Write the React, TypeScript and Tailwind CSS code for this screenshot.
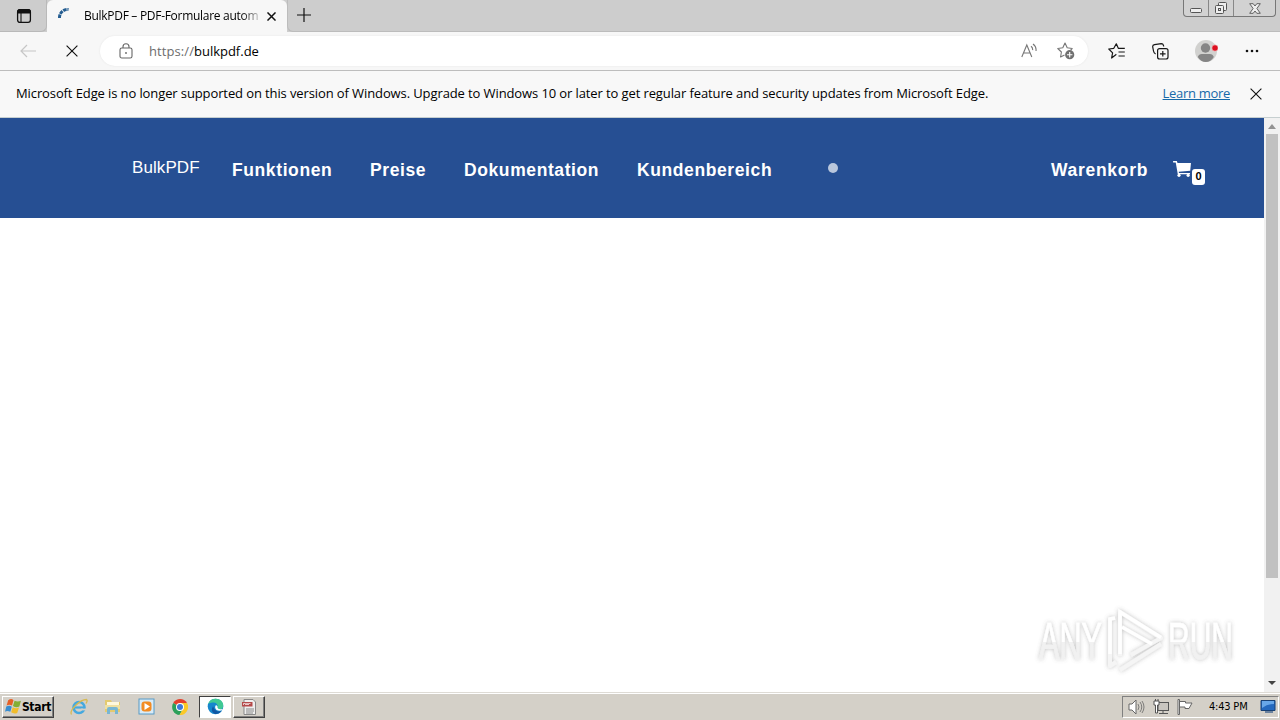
import React from "react";

const ui = "font-['Open_Sans','Noto_Sans',sans-serif]";

function Cross({ size, w = 1.2 }: { size: number; w?: number }) {
  return (
    <svg width={size} height={size} viewBox="0 0 12 12" fill="none" stroke="#111" strokeWidth={w} className="shrink-0">
      <path d="M.6.6l10.8 10.8M11.4.6L.6 11.4" />
    </svg>
  );
}

function TabBar() {
  return (
    <header className="flex h-8 shrink-0 items-start bg-[#cdcdcd]">
      <div className="flex h-8 w-[47px] shrink-0 items-center rounded-br-md border-r border-b border-[#b9b9b9] pl-4">
        <svg width="16" height="16" viewBox="0 0 16 16" fill="none" stroke="#111">
          <rect x="1.6" y="1.6" width="12.8" height="12.8" rx="2.3" strokeWidth="1.3" />
          <path d="M1.6 4V3.5q0-2 2-2h8.800q2 0 2 2V5H1.600z" fill="#111" />
          <path d="M5 5v9.400" strokeWidth="1.1" />
        </svg>
      </div>
      <div className="flex h-8 w-[240px] shrink-0 items-center rounded-t-md bg-[#f7f7f7] pl-[10px]">
        <svg width="14" height="14" viewBox="0 0 14 14" fill="none" stroke="#245d91" strokeWidth="3" className="mb-1">
          <path d="M2.500 11A8 8 0 0 1 11.500 2.500" strokeDasharray="3.500 .8" />
        </svg>
        <div className="ml-[13px] flex h-5 w-[175px] shrink-0 items-center [mask-image:linear-gradient(to_right,black_90%,#0003)]">
          <span className={`${ui} whitespace-nowrap text-[12px] leading-5 tracking-[-0.29px] text-black`}>BulkPDF – PDF-Formulare autom</span>
        </div>
        <span className="ml-[8px]"><Cross size={9} w={2} /></span>
      </div>
      <div className="flex h-8 flex-1 items-start justify-between rounded-bl-md border-b border-l border-[#bcbcbc] pr-1 pl-[9px]">
        <svg width="14" height="14" viewBox="0 0 14 14" stroke="#111" strokeWidth="1.2" className="mt-2"><path d="M7 0v14M0 7h14" /></svg>
        <div className="flex h-[17px] w-[93px] rounded-b-[4px] border border-t-0 border-[#777] bg-[#d2d2d2]">
          <div className="flex w-[25px] items-center justify-center border-r border-[#888] pt-1">
            <svg width="12" height="5" viewBox="0 0 12 5"><rect x=".5" y=".5" width="11" height="4" rx="1" fill="#eee" stroke="#555" /></svg>
          </div>
          <div className="flex w-[25px] items-center justify-center border-r border-[#888]">
            <svg width="14" height="14" viewBox="0 0 14 14" fill="#eee" stroke="#555"><rect x="4.500" y="1.500" width="8" height="8" rx="1" /><rect x="1.500" y="4.500" width="8" height="8" rx="1" /><rect x="4.500" y="7.500" width="2" height="2" /></svg>
          </div>
          <div className="flex flex-1 items-center justify-center">
            <svg width="12" height="11" viewBox="0 0 12 11" fill="#eee" stroke="#555" strokeWidth=".9"><path d="M.7.700h3.500L6 3 7.800.700h3.500L7.900 5.500l3.400 4.800H7.800L6 8 4.200 10.300H.7l3.400-4.800z" /></svg>
          </div>
        </div>
      </div>
    </header>
  );
}

function Toolbar() {
  return (
    <div className="flex h-[39px] shrink-0 items-center border-b border-[#bdbdbd] bg-[#f7f7f7] pl-5">
      <svg width="16" height="14" viewBox="0 0 16 14" fill="none" stroke="#c6c6c6" strokeWidth="1.2" className="shrink-0"><path d="M16 7H1M7 1L1 7l6 6" /></svg>
      <span className="ml-[30px]"><Cross size={12} w={1.15} /></span>
      <div className="ml-[22px] flex h-[30px] w-[988px] shrink-0 items-center rounded-full bg-white pl-[19px] shadow-[0_0_2px_#e3e3e3]">
        <svg width="14" height="16" viewBox="0 0 14 16" fill="none" stroke="#666" strokeWidth="1.100" className="shrink-0">
          <rect x="1" y="5" width="12" height="10" rx="1.800" /><path d="M4 5V3.800a3 3 0 0 1 6 0V5" /><circle cx="7" cy="10" r=".9" fill="#666" stroke="none" />
        </svg>
        <span className={`${ui} ml-4 w-[873px] whitespace-nowrap text-[13px] leading-5 tracking-[-0.01px] text-black`}><span className="tracking-[0.08px] text-[#6d6d6d]">https://</span>bulkpdf.de</span>
        <svg width="16" height="16" viewBox="0 0 16 16" fill="none" stroke="#777" strokeWidth="1.100" className="-ml-px shrink-0">
          <path d="M.8 14L5.800 2l5 12M2.700 10h6.200M10 3.200q2 1.500 1.600 4M12 1q3.600 2.600 3 7" />
        </svg>
        <svg width="18" height="18" viewBox="0 0 18 18" fill="none" stroke="#777" strokeWidth="1.100" className="ml-5 shrink-0">
          <path d="M7.500 13L3.600 15l.8-5L.8 6.500l5-.7L8 1l2.200 4.800 5 .7-1.500 1.500" strokeLinejoin="round" />
          <circle cx="12.700" cy="12.700" r="4.600" fill="#707070" stroke="none" /><path d="M12.700 10v5.400M10 12.700h5.400" stroke="#fff" />
        </svg>
      </div>
      <svg width="18" height="16" viewBox="0 0 18 16" fill="none" stroke="#171717" strokeWidth="1.200" strokeLinejoin="round" className="ml-[19.500px] shrink-0">
        <path d="M7.500 12L3.600 15l1-5.200L.8 6l5-.7L8.300.8l2 4.500h6.500M7.500 12l.8-.7M10.500 9h6.300M10.500 13h6.300" />
      </svg>
      <svg width="17" height="17" viewBox="0 0 17 17" fill="none" stroke="#171717" strokeWidth="1.200" strokeLinejoin="round" className="ml-[26px] shrink-0">
        <rect x="5.600" y="5.600" width="10.400" height="10.400" rx="2" /><path d="M10.800 8v5.600M8 10.800h5.600M3.600 11Q1.800 10 1.500 8L.7 3.800Q.5 2 2.500 1.600l6.800-1q1.700 0 2.200 1.900l.2 1" />
      </svg>
      <svg width="24" height="24" viewBox="0 0 24 24" className="ml-[25.500px] shrink-0">
        <circle cx="12" cy="12" r="11" fill="#d1d1cf" /><circle cx="11.500" cy="9" r="4.700" fill="#858585" /><path d="M3.800 18q1-3 4-3h8q3 0 4 3-3 5-8 5t-8-5z" fill="#858585" /><circle cx="21" cy="9" r="3.200" fill="#dc1020" stroke="#f8dcdc" strokeWidth=".6" />
      </svg>
      <svg width="14" height="4" viewBox="0 0 14 4" fill="#111" className="ml-[27px] shrink-0"><circle cx="2" cy="2" r="1.300" /><circle cx="7" cy="2" r="1.300" /><circle cx="12" cy="2" r="1.300" /></svg>
    </div>
  );
}

function Notice() {
  return (
    <div className={`${ui} flex h-[47px] shrink-0 items-center border-b border-[#c6cfd0] bg-[#f8f8f8] pr-[18px] pl-4 text-[13px] text-black`}>
      <span className="whitespace-nowrap tracking-[-0.107px]">Microsoft Edge is no longer supported on this version of Windows. Upgrade to Windows 10 or later to get regular feature and security updates from Microsoft Edge.</span>
      <a className="mr-5 ml-auto whitespace-nowrap tracking-[-0.3px] text-[#1769a8] underline underline-offset-1">Learn more</a>
      <Cross size={12} w={1.1} />
    </div>
  );
}

function Page() {
  const nav = "whitespace-nowrap text-[17.500px] font-bold leading-5 mt-[3px] shrink-0";
  return (
    <div className="flex min-h-0 flex-1">
      <main className="relative flex-1 bg-white">
        <nav className="flex h-[100px] items-center bg-[#264f93] pl-[132px] font-['Liberation_Sans',Arial,sans-serif] text-white">
          <span className="mb-px w-[100px] shrink-0 text-[17px] leading-5 tracking-[0.08px]">BulkPDF</span>
          <span className={`${nav} w-[138px] tracking-[0.6px]`}>Funktionen</span>
          <span className={`${nav} w-[94px] tracking-[0.58px]`}>Preise</span>
          <span className={`${nav} w-[173px] tracking-[0.6px]`}>Dokumentation</span>
          <span className={`${nav} w-[191px] tracking-[0.6px]`}>Kundenbereich</span>
          <span className="size-[10px] shrink-0 rounded-full bg-[#b9c7dd]" />
          <span className={`${nav} ml-[213px] w-[122px] tracking-[0.7px]`}>Warenkorb</span>
          <span className="relative mt-[3px] h-[18px] w-8 shrink-0">
            <svg width="19" height="16" viewBox="0 0 20 17" fill="white"><path d="M0 0h4l.7 2H19l-.8 8.300L6 11.500l.2 1.200H18V14H5L2.800 1.600H0z" /><circle cx="6.300" cy="15.200" r="1.700" /><circle cx="16" cy="15.200" r="1.700" /></svg>
            <span className="absolute top-[8px] left-[19px] flex h-[16px] w-[13px] items-center justify-center rounded-[3px] bg-white text-[11px] font-bold leading-none text-black">0</span>
          </span>
        </nav>
        <svg width="202" height="74" viewBox="0 0 202 74" className="absolute right-[26px] bottom-[15px] overflow-visible">
          <defs>
            <filter id="glow" x="-20%" y="-20%" width="140%" height="140%"><feDropShadow dx="0" dy="0" stdDeviation="2" floodColor="#666" floodOpacity=".42" /></filter>
            <linearGradient id="shade" gradientUnits="userSpaceOnUse" x1="0" x2="0" y1="20" y2="56"><stop offset=".52" stopColor="#fff" /><stop offset=".54" stopColor="#f1f1f1" /></linearGradient>
          </defs>
          <g filter="url(#glow)">
            <g fill="url(#shade)" stroke="url(#shade)" strokeWidth=".6" fontFamily="Liberation Sans" fontSize="51">
              <text x="3" y="56" textLength="63" lengthAdjust="spacingAndGlyphs">ANY</text>
              <text x="132" y="56" textLength="65" lengthAdjust="spacingAndGlyphs">RUN</text>
            </g>
            <g fill="none" stroke="#f5f5f5" strokeWidth="4" strokeLinejoin="round">
              <path d="M84 53V9l41 26-30 17" /><path d="M74 15v48l6-4" /><path d="M84 67l41-26" />
            </g>
            <path d="M84 51V9l41 25.500M74 51V16l5-1M86 24l30 17" fill="none" stroke="#fff" strokeWidth="3.500" />
          </g>
        </svg>
      </main>
      <aside className="flex w-4 shrink-0 flex-col items-center bg-[#f1f1f1]">
        <div className="flex h-4 items-center"><svg width="8" height="5" viewBox="0 0 8 5"><path d="M0 5l4-5 4 5z" fill="#929292" /></svg></div>
        <div className="h-[444px] w-3 bg-[#c1c1c1]" />
        <div className="mt-auto flex h-[19px] items-center"><svg width="8" height="4" viewBox="0 0 8 4"><path d="M0 0h8L4 4z" fill="#444" /></svg></div>
      </aside>
    </div>
  );
}

function Taskbar() {
  const button = "flex h-[22px] shrink-0 items-center justify-center border border-t-white border-l-white border-r-[#404040] border-b-[#404040] shadow-[inset_-1px_-1px_#808080]";
  return (
    <footer className="flex h-7 shrink-0 items-center border-t border-[#dedbd5] bg-[#d4d0c8] pl-[2px] shadow-[inset_0_1px_white]">
      <button className={`${button} w-[52px] font-['DejaVu_Sans_Condensed','DejaVu_Sans',sans-serif] text-[12px] font-bold tracking-[-0.3px] text-black`}>
        <svg width="17" height="17" viewBox="0 0 16 16" className="shrink-0"><path d="M3 2q3-2 5 0L6.600 7Q4 5.600 1.500 7z" fill="#e66026" /><path d="M9 2.500q3 1.500 6 0L13.500 8q-3 1.500-6-.5z" fill="#83ae35" /><path d="M1.200 8q3-1.500 5.200.2L5 13q-3-1.500-5 0z" fill="#388dd0" /><path d="M7.300 8.700q2.700 1.700 5.900.3L11.500 14q-3 1.400-5.700-.5z" fill="#f1bd2c" /></svg>
        <span className="pt-px">Start</span>
      </button>
      <svg width="18" height="18" viewBox="0 0 18 18" className="ml-[16px] shrink-0">
        <circle cx="9" cy="9.500" r="5.500" fill="none" stroke="#45a9df" strokeWidth="2.600" /><path d="M5 9.500h9.500" stroke="#45a9df" strokeWidth="2.200" /><path d="M11 11.500h5" stroke="#d4d0c8" strokeWidth="1.800" /><path d="M1.500 16.500q-2-3 4-9t11-6q1.500 1-.5 4" fill="none" stroke="#d7b951" strokeWidth="1.300" />
      </svg>
      <svg width="17" height="17" viewBox="0 0 17 17" className="ml-[16px] shrink-0">
        <path d="M1 2h6l1 2h8v10H1z" fill="#e3ca70" /><path d="M3 4h12v6H3z" fill="#fff8dc" /><path d="M1 7h15v4H1z" fill="#efe0a2" /><path d="M3 16v-5q0-2 2-2h7q2 0 2 2v5h-3v-4H6v4z" fill="#78b6d3" />
      </svg>
      <svg width="17" height="17" viewBox="0 0 17 17" className="ml-[17px] shrink-0">
        <rect x="1" y="1" width="15" height="15" fill="#d9ebf7" stroke="#579ac5" /><rect x="3.500" y="3.500" width="10" height="10" rx="3" fill="#f28b23" /><path d="M6.500 5l5.500 3.500L6.500 12z" fill="#fff" />
      </svg>
      <svg width="16" height="16" viewBox="0 0 16 16" className="ml-[17px] shrink-0">
        <path d="M8 8L1.200 4A8 8 0 0 1 15 4z" fill="#e5402c" /><path d="M8 8L1.200 4A8 8 0 0 0 7.500 16L11 10z" fill="#2ba05a" /><path d="M8 8V4h7A8 8 0 0 1 7.500 16L11 10z" fill="#fbc927" /><circle cx="8" cy="8" r="4" fill="#fff" /><circle cx="8" cy="8" r="3" fill="#3d79da" />
      </svg>
      <div className="ml-[11px] flex h-[22px] w-8 shrink-0 items-center justify-center border border-t-[#404040] border-r-white border-b-white border-l-[#404040] bg-white">
        <svg width="17" height="17" viewBox="0 0 17 17"><circle cx="8.500" cy="8.500" r="7.800" fill="#1687cd" /><path d="M1 6Q3 .5 9 .7q7 .5 7.200 6.800 0 4-4 4-3 0-1.500-2.500Q11 5 7 4.500 3 4 1 6z" fill="#40c994" /><path d="M6 8.200q-3 5 2 7.800 4 .5 6.500-3-6 2-8.500-4.800z" fill="#1256a2" /><path d="M9 7q-2 2.500.5 5 3 1.500 6 0v-1q-5 .7-5-1.500.8-1.500-1.500-2.500z" fill="#fff" /></svg>
      </div>
      <div className={`${button} ml-[2px] w-8`}>
        <svg width="16" height="16" viewBox="0 0 16 16"><path d="M3 .5h9L14.500 3v12.500H3z" fill="#eee" stroke="#888" /><path d="M5 10h8M5 12h8M5 14h7" stroke="#888" /><rect x="1" y="3" width="10.500" height="4.500" fill="#b54a4a" /><path d="M2.500 6V4.500h2V6m1 0V4.500h1V6m1 0V4.500h2" stroke="#fff" fill="none" strokeWidth=".7" /></svg>
      </div>
      <div className="mr-[1px] ml-auto flex h-[22px] w-[157px] shrink-0 items-center border border-t-[#808080] border-r-white border-b-white border-l-[#808080] pl-[5px]">
        <svg width="17" height="16" viewBox="0 0 17 16" fill="#fff" stroke="#666" className="shrink-0"><path d="M1 5h3l4-4v14l-4-4H1z" /><path d="M10 5q2 3 0 6M12 3q3.500 5 0 10M14 2q4 6 0 12" fill="none" strokeWidth=".8" /></svg>
        <svg width="17" height="16" viewBox="0 0 17 16" fill="#c9c6c0" stroke="#555" className="ml-[8px] shrink-0"><rect x="5" y="3.500" width="10.500" height="8" /><path d="M6 14.500h9M10 12v2" /><path d="M1 2h5v4H4.500v8H2.500V6H1zM2.500 0v2m2.500-2v2" fill="#fff" /></svg>
        <svg width="16" height="16" viewBox="0 0 16 16" fill="#fff" stroke="#666" className="ml-[7px] shrink-0"><path d="M1 .5h1.500V15.500H1zM2.500 2.500h6v1.500h6.500L12 9.500H8V8H2.500z" /></svg>
        <span className="ml-[16px] w-[51px] shrink-0 whitespace-nowrap pt-px font-['DejaVu_Sans_Condensed','DejaVu_Sans',sans-serif] text-[11px] tracking-[-0.2px] text-black">4:43 PM</span>
        <svg width="16" height="15" viewBox="0 0 16 15" className="shrink-0"><path d="M1 1.500h14v10H1z" fill="#2569be" stroke="#194174" /><path d="M2 2h12v3Q7 5 2 9z" fill="#68a7e8" /><path d="M5 13h8" stroke="#486991" strokeWidth="1.500" /></svg>
      </div>
    </footer>
  );
}

export default function App() {
  return (
    <div className="flex h-[720px] w-[1280px] flex-col overflow-hidden bg-white">
      <TabBar />
      <Toolbar />
      <Notice />
      <Page />
      <Taskbar />
    </div>
  );
}
